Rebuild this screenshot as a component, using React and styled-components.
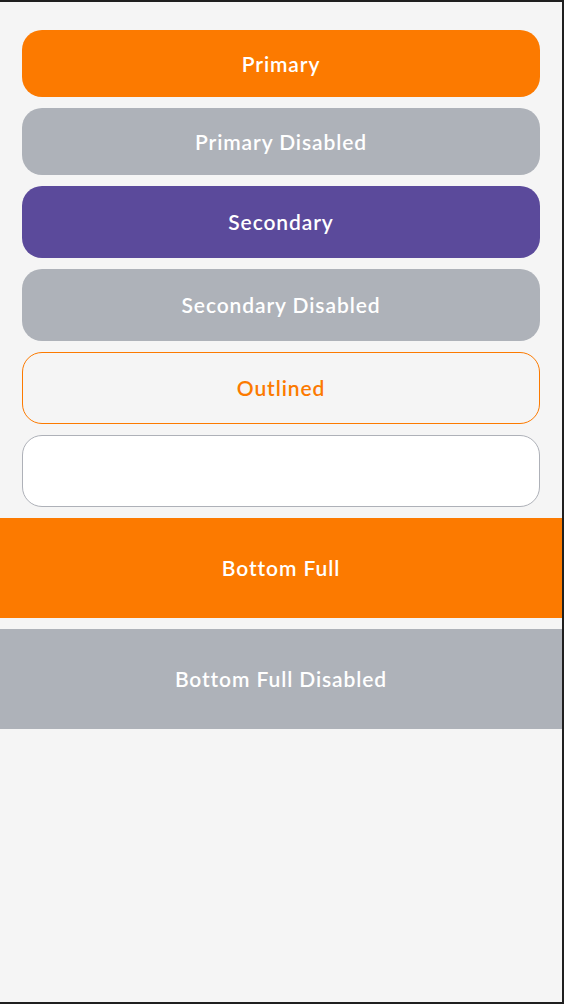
import React from "react";
import styled, { createGlobalStyle, css } from "styled-components";

const GlobalStyle = createGlobalStyle`
  html, body { margin: 0; padding: 0; background: #f5f5f5; }
  * { box-sizing: border-box; }
`;

const Frame = styled.div`
  width: 564px;
  height: 1004px;
  background: #f5f5f5;
  border-top: 2px solid #1f1f1f;
  border-right: 2px solid #1f1f1f;
  border-bottom: 2px solid #1f1f1f;
  display: flex;
  flex-direction: column;
  padding-top: 28px;
  font-family: "Lato", "Open Sans", sans-serif;
`;

const Stack = styled.div`
  display: flex;
  flex-direction: column;
  gap: 11px;
  padding: 0 22px;
`;

const variants = {
  primary: css`
    background: #fc7a00;
    color: #ffffff;
    border: none;
  `,
  disabled: css`
    background: #aeb2b9;
    color: #ffffff;
    border: none;
  `,
  secondary: css`
    background: #5b4a9b;
    color: #ffffff;
    border: none;
  `,
  outlined: css`
    background: transparent;
    color: #fc7a00;
    border: 1px solid #fc7a00;
  `,
  empty: css`
    background: #ffffff;
    color: #aeb2b9;
    border: 1.5px solid #aeb1b8;
  `,
};

const Label = css`
  font-family: inherit;
  font-size: 21px;
  font-weight: 600;
  letter-spacing: 0.9px;
  line-height: 1;
  padding: 0 0 1px;
`;

const Button = styled.button`
  display: flex;
  align-items: center;
  justify-content: center;
  width: 100%;
  height: ${(p) => p.$h}px;
  border-radius: 20px;
  cursor: pointer;
  ${Label}
  ${(p) => variants[p.$variant]}
`;

const FullStack = styled.div`
  display: flex;
  flex-direction: column;
  gap: 11px;
  margin-top: 11px;
`;

const FullButton = styled.button`
  display: flex;
  align-items: center;
  justify-content: center;
  width: 100%;
  height: 100px;
  border: none;
  border-radius: 0;
  color: #ffffff;
  background: ${(p) => (p.$disabled ? "#aeb2b9" : "#fc7a00")};
  cursor: pointer;
  ${Label}
`;

export default function App() {
  return (
    <>
      <GlobalStyle />
      <Frame>
        <Stack>
          <Button $variant="primary" $h={67}>Primary</Button>
          <Button $variant="disabled" $h={67}>Primary Disabled</Button>
          <Button $variant="secondary" $h={72}>Secondary</Button>
          <Button $variant="disabled" $h={72}>Secondary Disabled</Button>
          <Button $variant="outlined" $h={72}>Outlined</Button>
          <Button $variant="empty" $h={72}></Button>
        </Stack>
        <FullStack>
          <FullButton>Bottom Full</FullButton>
          <FullButton $disabled>Bottom Full Disabled</FullButton>
        </FullStack>
      </Frame>
    </>
  );
}
